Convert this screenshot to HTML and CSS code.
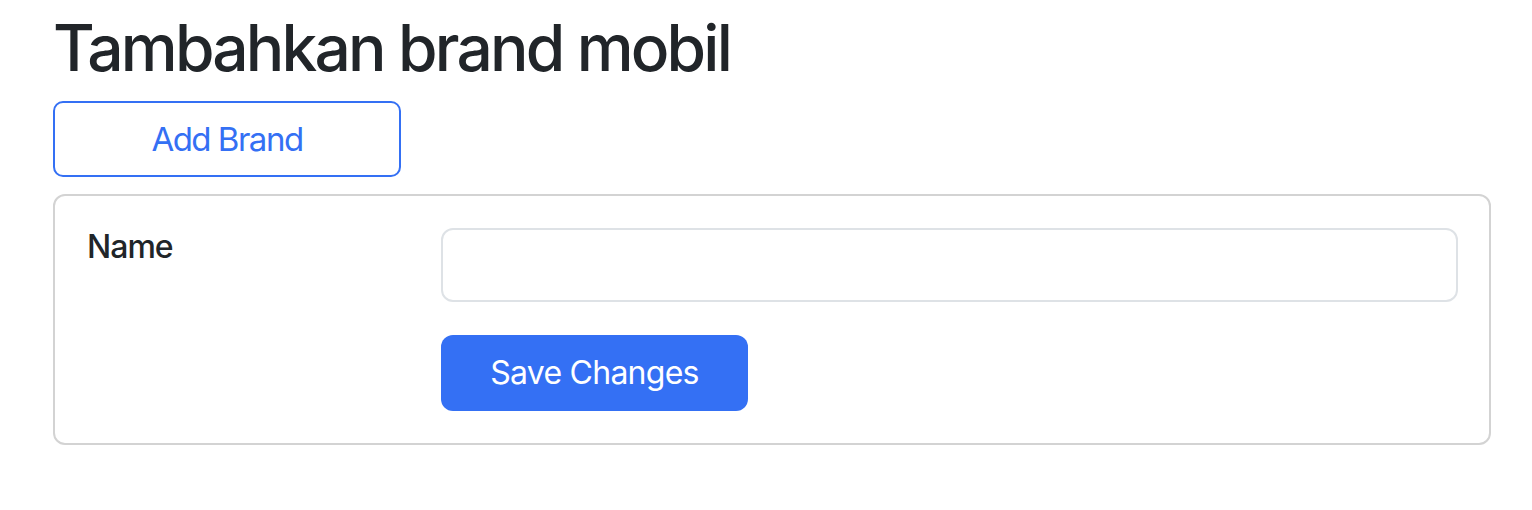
FILE: index.html
```html
<!DOCTYPE html>
<html lang="id">
<head>
<meta charset="utf-8">
<title>Tambahkan brand mobil</title>
<link rel="stylesheet" href="styles.css">
</head>
<body>
<main class="page">
  <h1 class="title">Tambahkan brand mobil</h1>
  <button class="btn-outline" type="button">Add Brand</button>
  <form class="card">
    <div class="form-row">
      <label class="label" for="name">Name</label>
      <div class="field">
        <input class="input" id="name" type="text">
        <button class="btn-primary" type="submit">Save Changes</button>
      </div>
    </div>
  </form>
</main>
</body>
</html>
```

FILE: styles.css
```css
* { box-sizing: border-box; }

html, body {
  margin: 0;
  padding: 0;
  background: #ffffff;
}

body {
  font-family: Inter, "Noto Sans", "Liberation Sans", sans-serif;
  color: #212529;
}

.page {
  padding: 0 41px 0 53px;
  display: flex;
  flex-direction: column;
  align-items: flex-start;
}

.title {
  margin: 10px 0 14px;
  font-size: 64px;
  font-weight: 550;
  line-height: 1.2;
  letter-spacing: -2.8px;
  color: #212529;
}

.btn-outline {
  width: 348px;
  height: 76px;
  border: 2px solid #3470f4;
  border-radius: 10px;
  background: #ffffff;
  color: #3470f4;
  font-family: inherit;
  font-size: 33px;
  font-weight: 400;
  letter-spacing: -1.5px;
  display: flex;
  align-items: center;
  justify-content: center;
  padding: 0;
}

.card {
  align-self: stretch;
  margin: 17px 0 0;
  border: 2px solid #d3d3d3;
  border-radius: 12px;
  padding: 32px 31px 32px 32px;
}

.form-row {
  display: grid;
  grid-template-columns: 354px 1fr;
}

.label {
  margin: 0;
  font-size: 32px;
  font-weight: 500;
  line-height: 1.2;
  letter-spacing: -1px;
  color: #212529;
}

.field {
  display: flex;
  flex-direction: column;
  align-items: flex-start;
  gap: 33px;
}

.input {
  width: 100%;
  height: 74px;
  border: 2px solid #dee2e6;
  border-radius: 12px;
  background: #ffffff;
  font-family: inherit;
  font-size: 32px;
  padding: 0 24px;
  outline: none;
}

.btn-primary {
  width: 307px;
  height: 76px;
  border: 0;
  border-radius: 12px;
  background: #3470f4;
  color: #ffffff;
  font-family: inherit;
  font-size: 32px;
  font-weight: 400;
  letter-spacing: -0.75px;
  padding: 0;
}
```
